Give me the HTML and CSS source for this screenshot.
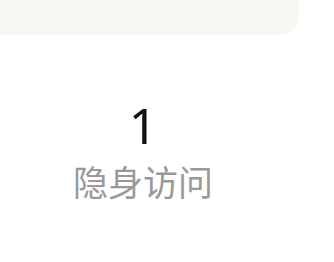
FILE: index.html
```html
<!DOCTYPE html>
<html lang="zh">
<head>
    <meta charset="UTF-8">
    <meta name="viewport" content="width=device-width, initial-scale=1.0">
    <title>隐身访问</title>
    <link rel="stylesheet" href="styles.css">
</head>
<body>
    <div class="panel"></div>
    <div class="stats">
        <div class="stat">
            <div class="stat-num">1</div>
            <div class="stat-label">隐身访问</div>
        </div>
    </div>
</body>
</html>
```

FILE: styles.css
```css
body {
    margin: 0;
    background: #fff;
    font-family: 'Noto Sans', 'Noto Sans CJK SC', sans-serif;
}

.panel {
    width: 299px;
    height: 35px;
    background: #f8f7f2;
    border-radius: 0 0 18px 0;
}

.stats {
    display: flex;
    width: 286px;
    padding-top: 60px;
}

.stat {
    flex: 1;
    display: flex;
    flex-direction: column;
    align-items: center;
}

.stat-num {
    font-size: 50px;
    line-height: 60px;
    color: #111;
}

.stat-label {
    margin-top: 6px;
    font-size: 35px;
    line-height: 44px;
    color: #999;
}
```
